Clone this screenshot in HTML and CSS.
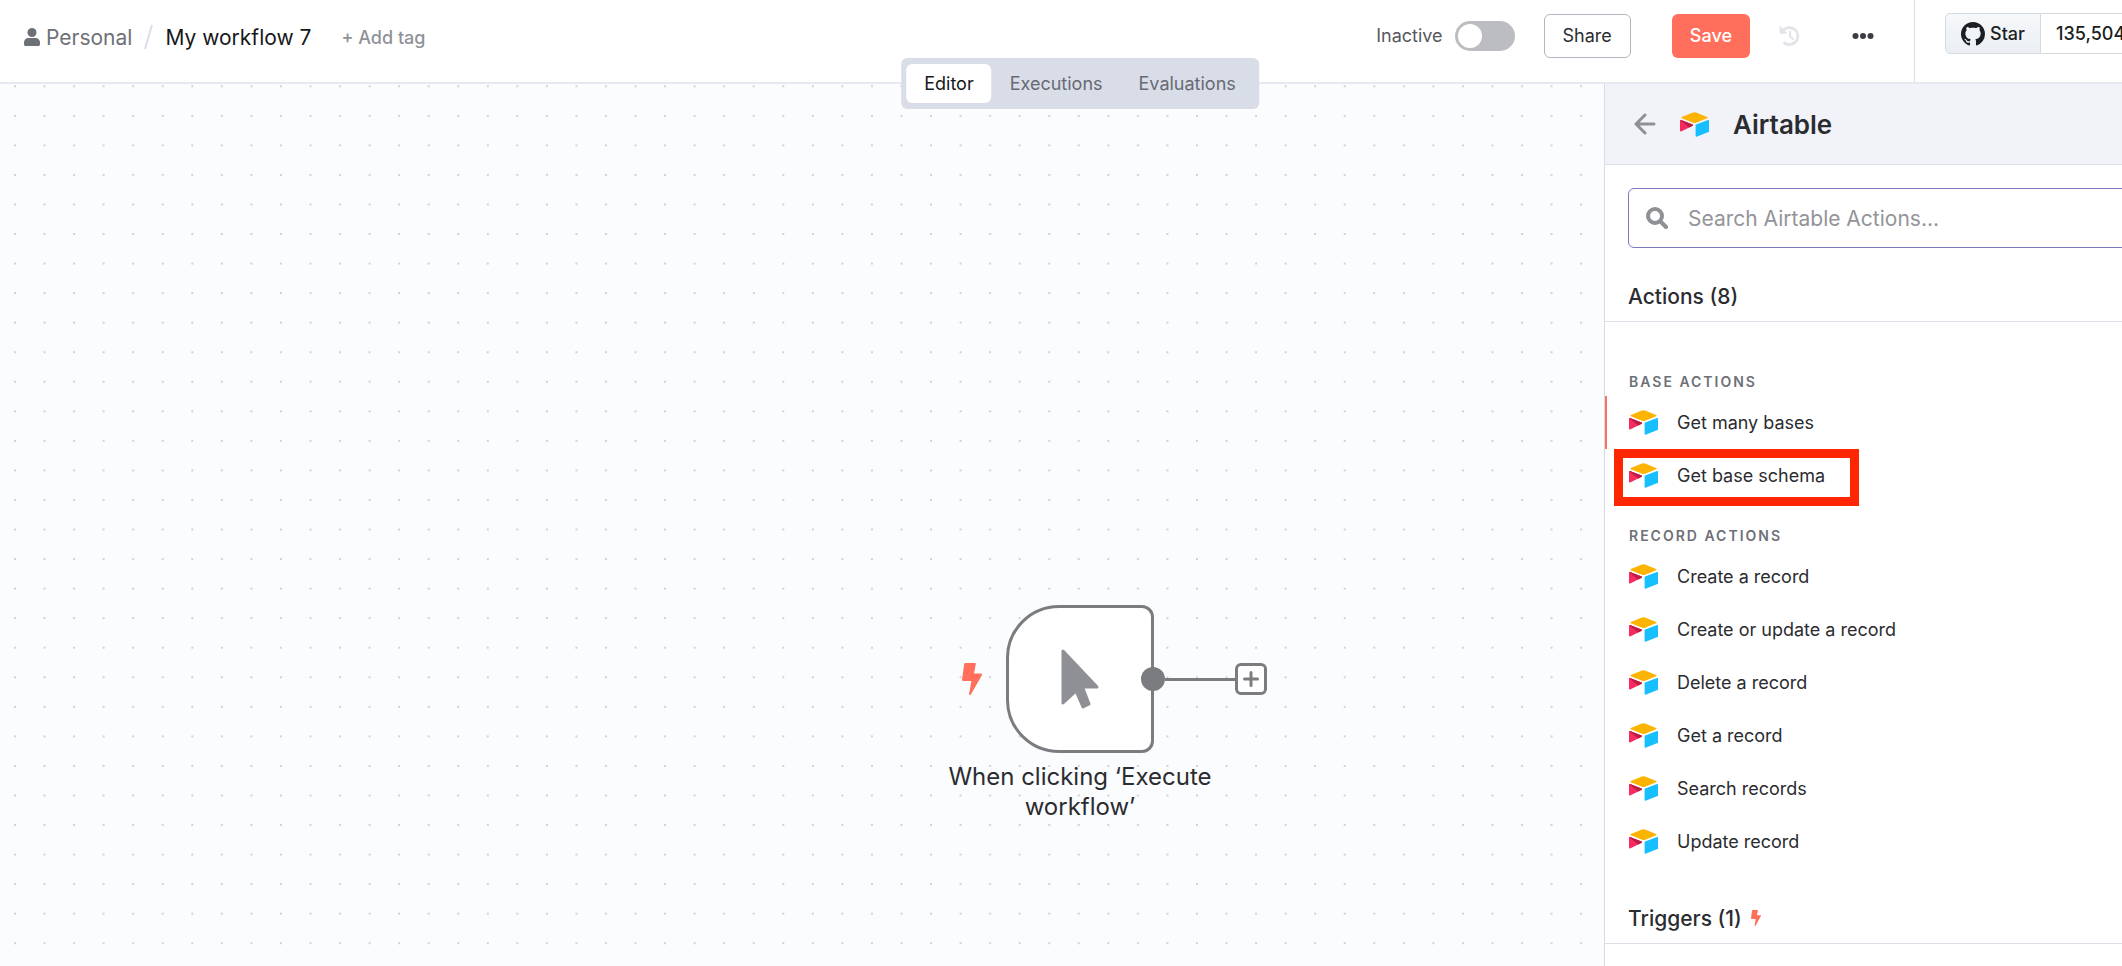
FILE: index.html
```html
<!DOCTYPE html>
<html lang="en">
<head>
  <meta charset="UTF-8" />
  <meta name="viewport" content="width=device-width, initial-scale=1.0"/>
  <title>My workflow 7 | Workflow Editor</title>
  <link rel="stylesheet" href="styles.css">
</head>
<body>

  <!-- Shared icons -->
  <svg class="sprite" aria-hidden="true">
    <symbol id="icon-airtable" viewBox="0 0 29 25">
      <path fill="#fcb400" d="M13 .5 1.800 5.100c-.6.300-.6.900 0 1.200l11.300 4.400c1 .4 2 .4 3 0l11-4.400c.6-.3.6-.9 0-1.200L16 .500a4 4 0 0 0-3 0z"/>
      <path fill="#18bfff" d="M15.600 13.300v10.800c0 .5.500.8 1 .6l11.900-4.600c.3-.1.500-.4.500-.7V8.600c0-.5-.5-.8-1-.6l-11.900 4.600c-.3.100-.5.400-.5.700z"/>
      <path fill="#f82b60" d="m12.700 13.800-3.500 1.700-8.100 3.900c-.5.200-1.100-.1-1.100-.6V8.700C0 8.200.6 7.800 1.100 8l11.500 4.600c.6.200.6.900.1 1.200z"/>
      <path fill="#ba1e45" d="M12.700 13.800 9.200 15.500.2 8.300c.3-.3.600-.4.900-.3l11.500 4.600c.6.200.6.900.1 1.200z"/>
    </symbol>
    <symbol id="icon-bolt" viewBox="0 0 20 32">
      <path fill="#ff6f5c" d="M3.200 0h9.600c.7 0 1.200.6 1 1.300L12 10.600h6.900c.9 0 1.400.9 1 1.600L9 31.300c-.6 1.100-2 .7-1.900-.5L9.400 17.900H1c-.6 0-1.100-.5-1-1.100L2.200 1c.1-.6.500-1 1-1z"/>
    </symbol>
  </svg>

  <div class="app">
    <header>
      <div class="breadcrumb">
        <a href="#" class="project-link">
          <svg class="user-icon" viewBox="0 0 16 18"><circle cx="8" cy="4.500" r="4.500"/><path d="M4.500 10h7A4.500 4.500 0 0 1 16 14.500v1.700c0 1-.8 1.800-1.800 1.800H1.800C.8 18 0 17.200 0 16.200v-1.700A4.500 4.500 0 0 1 4.500 10z"/></svg>
          Personal
        </a>
        <svg class="slash" viewBox="0 0 9 26"><path d="M8 1 1 25"/></svg>
        <span class="workflow-name">My workflow 7</span>
        <button type="button" class="add-tag">+ Add tag</button>
      </div>

      <div class="header-actions">
        <label class="activator">
          Inactive
          <input type="checkbox" class="toggle">
        </label>
        <button type="button" class="btn share-btn">Share</button>
        <button type="button" class="btn save-btn">Save</button>
        <button type="button" class="icon-btn history-btn" aria-label="Version history">
          <svg viewBox="0 0 22 22"><path d="M4 5.500A8.500 8.500 0 1 1 5.500 18" fill="none" stroke="#e3e4ea" stroke-width="2.800" stroke-linecap="round"/><path d="M1 1.500v6.700h6.700z" fill="#e3e4ea" stroke="#e3e4ea" stroke-linejoin="round"/><path d="M11 6.500v5l3 2.500" fill="none" stroke="#e3e4ea" stroke-width="2.200" stroke-linecap="round"/></svg>
        </button>
        <button type="button" class="icon-btn menu-btn" aria-label="More">
          <svg viewBox="0 0 22 6"><circle cx="3.500" cy="3" r="3"/><circle cx="11" cy="3" r="3"/><circle cx="18.500" cy="3" r="3"/></svg>
        </button>
      </div>

      <div class="github">
        <a href="#" class="star-btn">
          <svg viewBox="0 0 16 16"><path d="M8 0C3.580 0 0 3.580 0 8c0 3.540 2.290 6.530 5.470 7.590.4.070.55-.17.55-.38 0-.19-.01-.82-.01-1.490-2.010.37-2.530-.49-2.690-.94-.09-.23-.48-.94-.82-1.130-.28-.15-.68-.52-.01-.53.63-.01 1.080.58 1.230.82.720 1.210 1.870.87 2.330.66.070-.52.28-.87.510-1.070-1.780-.2-3.640-.89-3.640-3.950 0-.87.310-1.590.82-2.150-.08-.2-.36-1.020.08-2.120 0 0 .67-.21 2.200.82.640-.18 1.320-.27 2-.27s1.360.09 2 .27c1.530-1.040 2.200-.82 2.200-.82.440 1.100.16 1.920.08 2.120.510.56.82 1.270.82 2.150 0 3.070-1.870 3.750-3.650 3.950.29.25.54.73.54 1.480 0 1.070-.01 1.930-.01 2.200 0 .21.15.46.55.38A8.010 8.010 0 0 0 16 8c0-4.420-3.580-8-8-8z"/></svg>
          Star
        </a>
        <a href="#" class="star-count">135,504</a>
      </div>
    </header>

    <nav class="tabs">
      <button type="button" class="tab active">Editor</button>
      <button type="button" class="tab">Executions</button>
      <button type="button" class="tab">Evaluations</button>
    </nav>

    <div class="workspace">
      <main class="canvas">
        <svg class="canvas-grid" aria-hidden="true">
          <pattern id="dots" x="0.200" y="-12.500" width="29.550" height="29.550" patternUnits="userSpaceOnUse">
            <circle cx="14.800" cy="14.800" r="1" fill="#c3c5cb"/>
          </pattern>
          <rect width="100%" height="100%" fill="url(#dots)"/>
        </svg>

        <!-- Trigger node -->
        <div class="node">
          <svg class="node-bolt"><use href="#icon-bolt"/></svg>
          <div class="node-box">
            <svg class="cursor-icon" viewBox="0 0 38 60"><path d="M2 2v52l13-12 7 16 6-3-6.500-17H36z"/></svg>
          </div>
          <span class="handle"></span>
          <span class="edge"></span>
          <button type="button" class="plus-btn" aria-label="Add node">
            <svg viewBox="0 0 16 16"><path d="M8 1.500v13M1.500 8h13"/></svg>
          </button>
          <div class="node-label">When clicking ‘Execute workflow’</div>
        </div>
      </main>

      <aside class="panel">
        <div class="panel-header">
          <button type="button" class="icon-btn back-btn" aria-label="Back">
            <svg viewBox="0 0 22 22"><path d="M11 2 2 11l9 9M2.500 11H20"/></svg>
          </button>
          <svg class="app-icon"><use href="#icon-airtable"/></svg>
          <h1>Airtable</h1>
        </div>

        <label class="search">
          <svg viewBox="0 0 22 22"><circle cx="9" cy="9" r="7"/><path d="m14.500 14.500 5.500 5.500"/></svg>
          <input type="text" placeholder="Search Airtable Actions..." aria-label="Search Airtable Actions">
        </label>

        <h2 class="section-title">Actions (8)</h2>

        <div class="groups">
          <section class="group">
            <h3>Base Actions</h3>
            <button type="button" class="action selected"><svg class="app-icon"><use href="#icon-airtable"/></svg>Get many bases</button>
            <button type="button" class="action highlighted"><svg class="app-icon"><use href="#icon-airtable"/></svg>Get base schema</button>
          </section>
          <section class="group">
            <h3>Record Actions</h3>
            <button type="button" class="action"><svg class="app-icon"><use href="#icon-airtable"/></svg>Create a record</button>
            <button type="button" class="action"><svg class="app-icon"><use href="#icon-airtable"/></svg>Create or update a record</button>
            <button type="button" class="action"><svg class="app-icon"><use href="#icon-airtable"/></svg>Delete a record</button>
            <button type="button" class="action"><svg class="app-icon"><use href="#icon-airtable"/></svg>Get a record</button>
            <button type="button" class="action"><svg class="app-icon"><use href="#icon-airtable"/></svg>Search records</button>
            <button type="button" class="action"><svg class="app-icon"><use href="#icon-airtable"/></svg>Update record</button>
          </section>
        </div>

        <h2 class="section-title">Triggers (1) <svg class="title-bolt"><use href="#icon-bolt"/></svg></h2>
      </aside>
    </div>
  </div>

</body>
</html>
```

FILE: styles.css
```css
*,
*::before,
*::after {
  box-sizing: border-box;
}

body {
  margin: 0;
  background-color: #fff;
  color: #2b2c30;
  font-family: Inter, "Liberation Sans", sans-serif;
  font-size: 18px;
  overflow: hidden;
}

button,
input {
  font: inherit;
  color: inherit;
}

button {
  padding: 0;
  border: none;
  background: none;
  cursor: pointer;
}

a {
  color: inherit;
  text-decoration: none;
}

svg {
  display: block;
  flex: none;
}

.sprite {
  position: absolute;
  width: 0;
  height: 0;
}

/* The app runs a little past the right side of the window */
.app {
  position: relative;
  display: flex;
  flex-direction: column;
  width: calc(100% + 38px);
  height: 100vh;
}

/* Header */
header {
  display: flex;
  flex: none;
  height: 84px;
  border-bottom: 2px solid #e6e9f0;
}

.breadcrumb {
  display: flex;
  align-items: center;
  padding-left: 24px;
  padding-bottom: 8px;
  font-size: 21px;
}

.project-link {
  display: flex;
  align-items: center;
  gap: 6px;
  color: #6e7077;
}

.user-icon {
  width: 16px;
  height: 18px;
  fill: #6e7077;
}

.slash {
  width: 9px;
  height: 26px;
  margin: 0 12px;
  fill: none;
  stroke: #d9dee8;
  stroke-width: 2;
}

.workflow-name {
  color: #17181a;
}

.add-tag {
  margin-left: 30px;
  color: #909298;
  font-size: 18px;
  font-weight: 500;
}

.header-actions {
  display: flex;
  align-items: center;
  margin-left: auto;
  padding-right: 40px;
  padding-bottom: 11px;
}

.activator {
  display: flex;
  align-items: center;
  gap: 12px;
  color: #56585e;
}

.toggle {
  appearance: none;
  width: 60px;
  height: 30px;
  margin: 0;
  padding: 3px;
  border-radius: 15px;
  background-color: #bcbdc0;
}

.toggle::before {
  content: "";
  display: block;
  width: 24px;
  height: 24px;
  border-radius: 50%;
  background-color: #fff;
}

.toggle:checked::before {
  margin-left: 30px;
}

.btn {
  height: 44px;
  padding: 0 18px;
  border-radius: 6px;
}

.share-btn {
  margin-left: 29px;
  border: 1px solid #b4b6c0;
}

.save-btn {
  margin-left: 41px;
  background-color: #ff6f5c;
  color: #fff;
  font-weight: 500;
}

.history-btn {
  margin-left: 29px;
}

.history-btn svg {
  width: 22px;
  height: 22px;
}

.menu-btn {
  margin-left: 51px;
}

.menu-btn svg {
  width: 22px;
  height: 6px;
  fill: #3c3d42;
}

.github {
  display: flex;
  align-items: flex-start;
  width: 246px;
  padding: 13px 30px;
  border-left: 1px solid #d9dee8;
  color: #1b1f23;
  font-weight: 500;
}

.star-btn,
.star-count {
  display: flex;
  align-items: center;
  height: 41px;
  border: 1px solid #d3dbe0;
}

.star-btn {
  gap: 5px;
  padding: 0 15px;
  border-radius: 5px 0 0 5px;
  background: linear-gradient(#f6f8fa, #ebeff3);
}

.star-btn svg {
  width: 24px;
  height: 24px;
  fill: #1b1f23;
}

.star-count {
  padding: 0 15px;
  border-left: none;
  border-radius: 0 5px 5px 0;
}

/* View switcher, sits over the header border */
.tabs {
  position: absolute;
  z-index: 1;
  top: 58px;
  left: 50%;
  display: flex;
  padding: 6px 5px;
  border-radius: 6px;
  background-color: #d9dde8;
  transform: translateX(-50%);
}

.tab {
  height: 39px;
  padding: 0 18px;
  border-radius: 6px;
  color: #676a73;
}

.tab.active {
  background-color: #fff;
  color: #17181a;
}

/* Canvas */
.workspace {
  display: flex;
  flex: 1;
  min-height: 0;
}

.canvas {
  position: relative;
  flex: 1;
  background-color: #fbfcfe;
}

.canvas-grid {
  position: absolute;
  width: 100%;
  height: 100%;
}

.node {
  position: absolute;
  top: 521px;
  left: 1006px;
  width: 148px;
}

.node-box {
  display: flex;
  align-items: center;
  justify-content: center;
  height: 148px;
  border: 3px solid #7b7c7f;
  border-radius: 53px 12px 12px 53px;
  background-color: #fff;
}

.cursor-icon {
  width: 38px;
  height: 60px;
  fill: #8f9095;
  stroke: #8f9095;
  stroke-width: 3;
  stroke-linejoin: round;
}

.node-bolt {
  position: absolute;
  top: 58px;
  left: -44px;
  width: 20px;
  height: 32px;
}

.handle {
  position: absolute;
  top: 62px;
  left: 135px;
  width: 24px;
  height: 24px;
  border-radius: 50%;
  background-color: #7b7c7f;
}

.edge {
  position: absolute;
  top: 73px;
  left: 159px;
  width: 70px;
  height: 3px;
  background-color: #7b7c7f;
}

.plus-btn {
  position: absolute;
  top: 58px;
  left: 229px;
  display: flex;
  align-items: center;
  justify-content: center;
  width: 32px;
  height: 32px;
  border: 3px solid #7b7c7f;
  border-radius: 6px;
  background-color: #fff;
}

.plus-btn svg {
  width: 16px;
  height: 16px;
  stroke: #7b7c7f;
  stroke-width: 3;
  stroke-linecap: round;
}

.node-label {
  width: 290px;
  margin: 9px 0 0 -71px;
  font-size: 24px;
  line-height: 30px;
  text-align: center;
}

/* Node panel */
.panel {
  width: 556px;
  overflow: hidden;
  border-left: 1px solid #d9dce8;
  background-color: #fff;
}

.panel-header {
  display: flex;
  align-items: center;
  height: 81px;
  padding: 0 29px;
  border-bottom: 1px solid #dcdfe8;
  background-color: #f1f3f9;
}

.back-btn svg {
  width: 22px;
  height: 22px;
  fill: none;
  stroke: #8f9095;
  stroke-width: 3;
  stroke-linecap: round;
  stroke-linejoin: round;
}

.app-icon {
  width: 29px;
  height: 25px;
}

.panel-header .app-icon {
  margin: 0 24px;
}

.panel-header h1 {
  margin: 0;
  font-size: 26px;
  font-weight: 600;
}

.search {
  display: flex;
  align-items: center;
  gap: 20px;
  height: 60px;
  margin: 23px 23px 21px;
  padding: 0 17px;
  border: 1px solid #7c78bd;
  border-radius: 6px;
}

.search svg {
  width: 22px;
  height: 22px;
  fill: none;
  stroke: #8f9095;
  stroke-width: 4;
  stroke-linecap: round;
}

.search input {
  flex: 1;
  padding: 0;
  border: none;
  outline: none;
  background: none;
  font-size: 21px;
}

.search input::placeholder {
  color: #939499;
}

.section-title {
  display: flex;
  align-items: center;
  gap: 9px;
  height: 53px;
  margin: 0;
  padding: 2px 23px 0;
  border-bottom: 1px solid #dcdfe8;
  font-size: 21px;
  font-weight: 500;
}

.title-bolt {
  width: 10px;
  height: 16px;
}

.groups {
  padding: 26px 0 23px;
}

.group {
  padding-top: 20px;
}

.group h3 {
  margin: 0;
  padding-left: 24px;
  color: #6e7077;
  font-size: 14px;
  font-weight: 600;
  line-height: 28px;
  letter-spacing: 2px;
  text-transform: uppercase;
}

.action {
  position: relative;
  display: flex;
  align-items: center;
  gap: 19px;
  width: 100%;
  height: 53px;
  padding: 0 24px;
}

.action.selected {
  box-shadow: inset 2px 0 #ff6f5c;
}

/* Red frame drawn round the step to pick */
.action.highlighted::after {
  content: "";
  position: absolute;
  top: 0;
  left: 9px;
  width: 245px;
  height: 57px;
  border: 9px solid #ff2600;
}
```
